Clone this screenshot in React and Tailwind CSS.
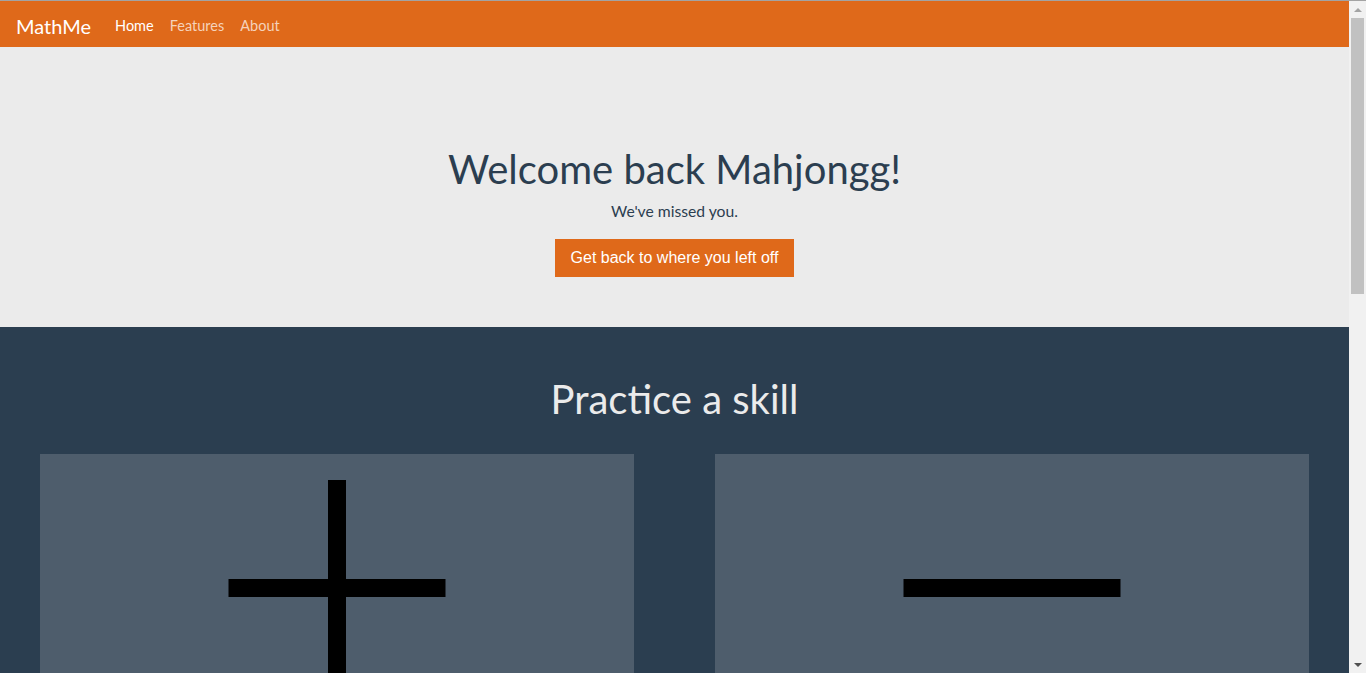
import React from 'react';

const NavBar = () => (
  <nav className="h-[46px] bg-[#df691a] flex items-center px-4 pt-[3px]">
    <span className="text-[20px] text-white mr-6">MathMe</span>
    <a className="text-[14.5px] text-white mr-4">Home</a>
    <a className="text-[14.5px] text-[#f5d2bb] mr-4">Features</a>
    <a className="text-[14.5px] text-[#f5d2bb]">About</a>
  </nav>
);

const SkillCard = ({ plus }) => (
  <div className="flex-1 h-[560px] bg-[#4e5d6c] relative">
    <div className="absolute left-1/2 top-[125px] -translate-x-1/2 w-[217px] h-[18px] bg-black" />
    {plus && <div className="absolute left-1/2 top-[26px] -translate-x-1/2 w-[18px] h-[217px] bg-black" />}
  </div>
);

const ScrollBar = () => (
  <div className="fixed right-0 top-[1px] bottom-0 w-[17px] bg-[#f1f1f1] flex flex-col items-center">
    <div className="h-[17px] flex items-center justify-center">
      <div className="w-0 h-0 border-x-[4px] border-x-transparent border-b-[4px] border-b-[#a3a3a3]" />
    </div>
    <div className="w-[13px] h-[276px] bg-[#c1c1c1]" />
    <div className="flex-1" />
    <div className="h-[17px] flex items-center justify-center">
      <div className="w-0 h-0 border-x-[4px] border-x-transparent border-t-[4px] border-t-[#505050]" />
    </div>
  </div>
);

export default function App() {
  return (
    <div className="font-['Lato','Noto_Sans',sans-serif] min-h-[1557px] bg-[#2b3e50] border-t border-[#a3a3a3]">
      <div className="mr-[17px]">
        <NavBar />
        <section className="h-[280px] bg-[#ebebeb] text-[#2b3e50] flex flex-col items-center pt-[100px]">
          <h1 className="text-[40px] leading-[1.1]">Welcome back Mahjongg!</h1>
          <p className="text-[15.7px] mt-[9px]">We've missed you.</p>
          <button className="mt-[15px] h-[38px] px-4 bg-[#df691a] text-white text-[16px] font-['Liberation_Sans',Arial,sans-serif]">
            Get back to where you left off
          </button>
        </section>
        <section className="pt-[50px] pb-20">
          <h2 className="text-center text-[40px] leading-[1.1] text-[#ebebeb]">Practice a skill</h2>
          <div className="flex gap-[81px] px-10 mt-[33px]">
            <SkillCard plus />
            <SkillCard />
          </div>
        </section>
      </div>
      <ScrollBar />
    </div>
  );
}
